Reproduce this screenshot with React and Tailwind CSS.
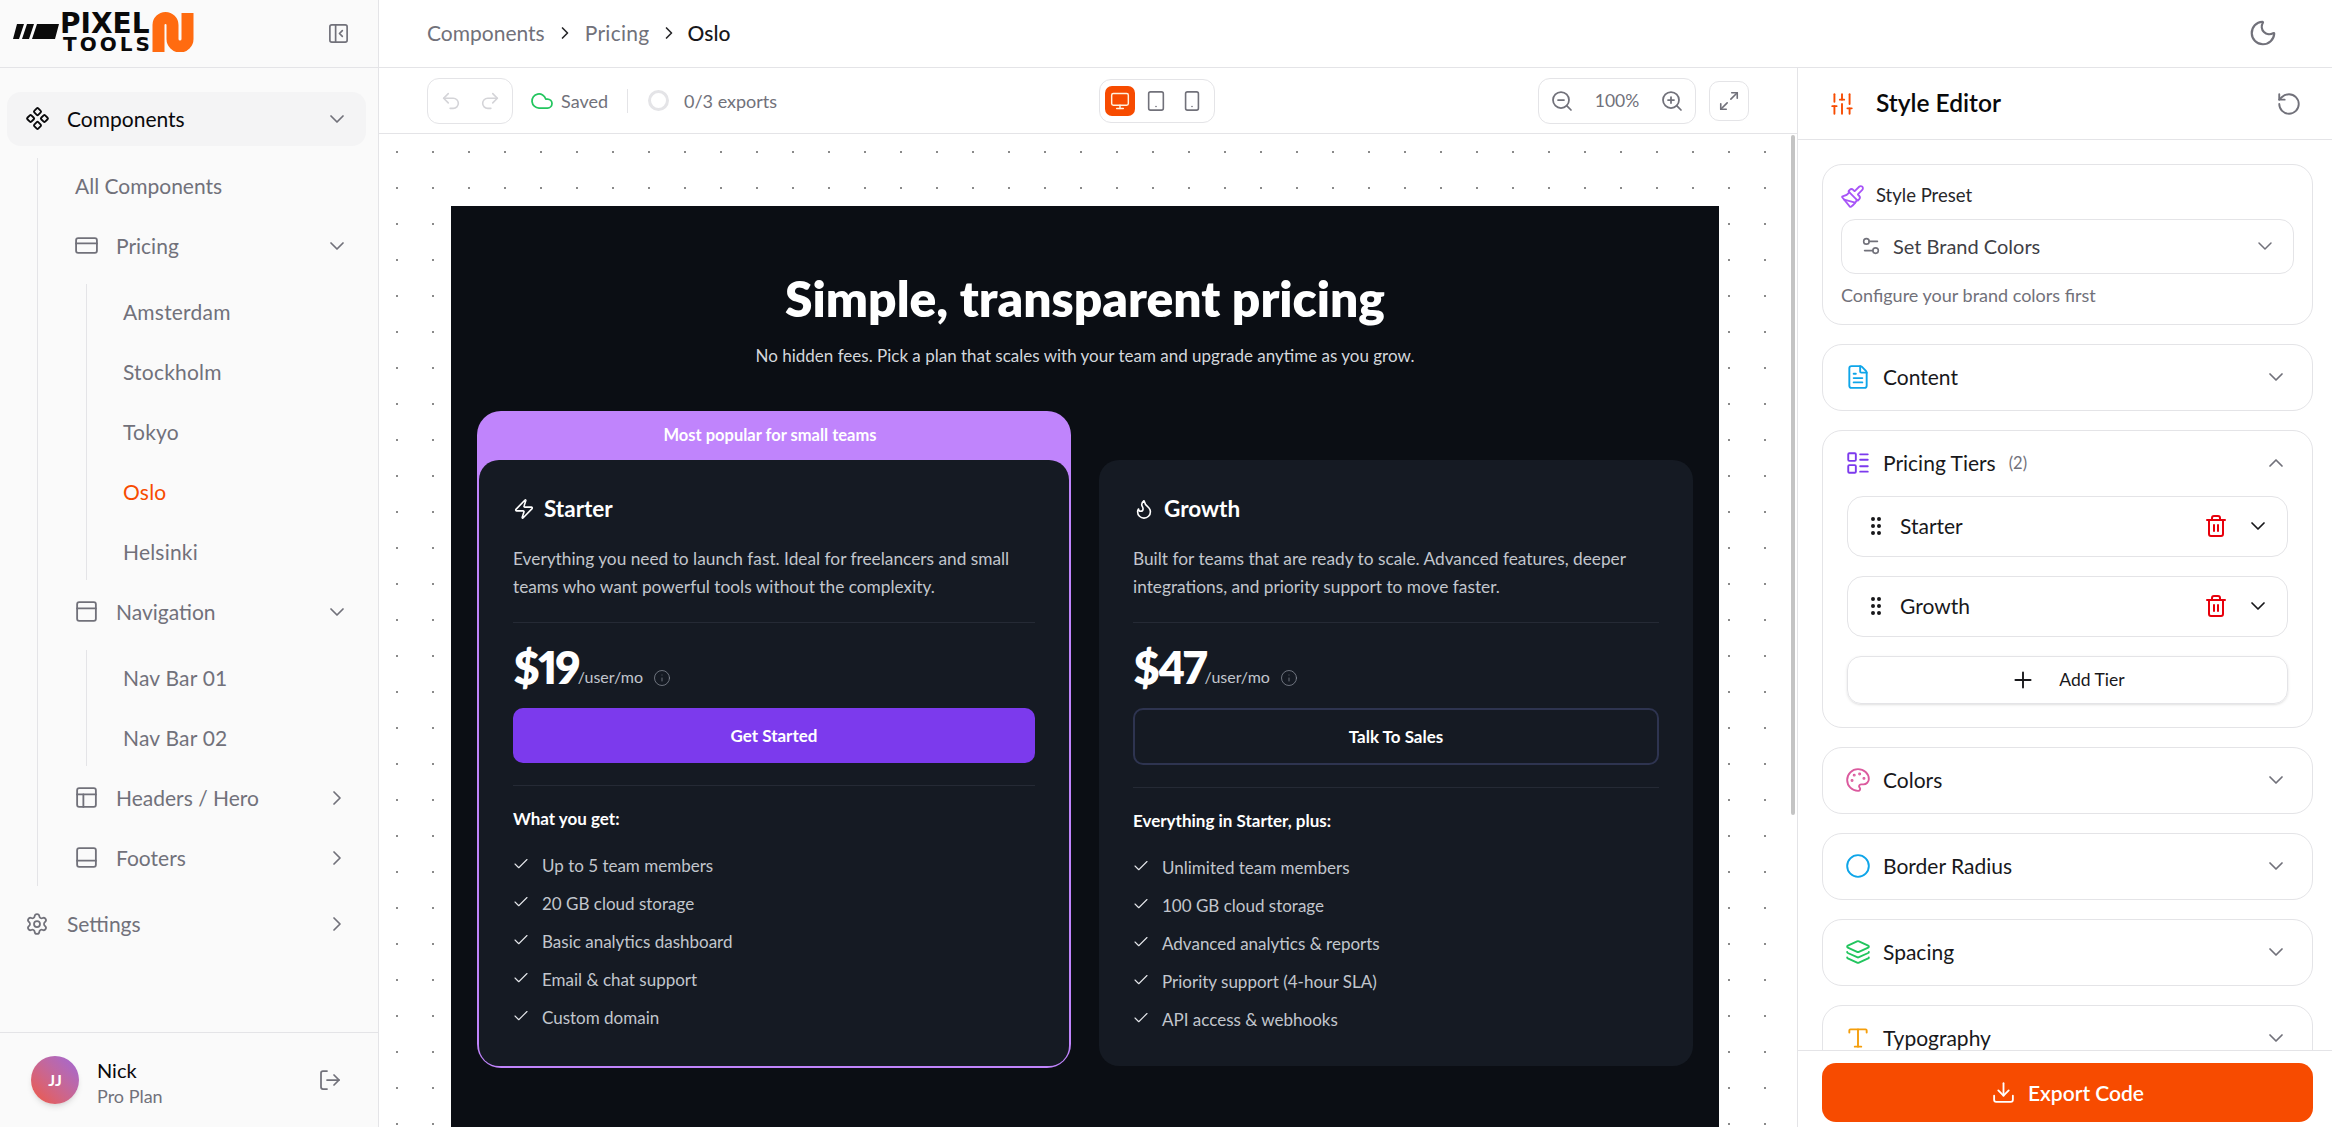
import React from 'react';
import {
  Component, ChevronDown, ChevronRight, ChevronUp, CreditCard, PanelTop, PanelsTopLeft, PanelBottom,
  Settings, LogOut, PanelLeftClose, Moon, Undo2, Redo2, Cloud, Monitor, Tablet, Smartphone, ZoomIn, ZoomOut,
  Maximize2, SlidersVertical, RotateCcw, Paintbrush, Settings2, FileText, LayoutList, Palette, Circle, Layers,
  Type, GripVertical, Trash2, Plus, Download, Zap, Flame, Info, Check,
} from 'lucide-react';

const Logo = () => (
  <div className="flex items-center mb-[3px]">
    <svg width="48" height="40" viewBox="0 0 48 40" className="shrink-0">
      <path d="M4 12h7l-5 15H0z M14 12h7l-5 15H9z M24 12h22l-4 15H19z" fill="#0a0a0a" transform="translate(1 0)" />
    </svg>
    <div className="flex flex-col w-[92px] font-['DejaVu_Sans'] font-bold text-[#0a0a0a] leading-none">
      <span className="text-[28px] h-[24px] leading-[24px]">PIXEL</span>
      <span className="text-[20px] h-[16px] leading-[16px] tracking-[3px] pl-[3px]">TOOLS</span>
    </div>
    <svg width="44" height="40" viewBox="0 0 44 40" className="shrink-0">
      <path d="M6.5 40V13a7 7 0 0 1 14 0V27a7.5 7.5 0 0 0 15 0V1" fill="none" stroke="#ff6b10" strokeWidth="12" />
    </svg>
  </div>
);

const NavRow = ({ icon: Icon, label, open, closed }) => (
  <div className="flex items-center h-[56px] pb-[1px] text-[21px] text-[#71717a]">
    <Icon size={25} strokeWidth={1.75} className="shrink-0 -ml-[1px]" />
    <span className="ml-[17px] flex-1">{label}</span>
    {open && <ChevronDown size={24} className="mr-[17px]" strokeWidth={1.75} />}
    {closed && <ChevronRight size={24} className="mr-[17px]" strokeWidth={1.75} />}
  </div>
);

const SubList = ({ items }) => (
  <div className="ml-[11px] border-l border-[#e4e4e7] pl-[36px] flex flex-col gap-[4px] mt-[10px]">
    {items.map((item) => (
      <div
        key={item}
        className={`h-[56px] pb-[1px] flex items-center text-[21px] tracking-[0.2px] ${item === 'Oslo' ? 'text-[#f74b00]' : 'text-[#71717a]'}`}
      >
        {item}
      </div>
    ))}
  </div>
);

const Sidebar = () => (
  <aside className="w-[379px] shrink-0 h-full bg-[#fafafa] border-r border-[#e4e4e7] flex flex-col">
    <div className="h-[68px] shrink-0 border-b border-[#e4e4e7] flex items-center justify-between pl-[12px] pr-[28px]">
      <Logo />
      <PanelLeftClose size={23} className="text-[#71717a]" strokeWidth={1.75} />
    </div>
    <nav className="flex-1 pl-[7px] pr-[12px] pt-[24px]">
      <div className="h-[54px] pb-[1px] rounded-[14px] bg-[#f4f4f5] flex items-center pl-[18px] text-[21px] text-[#09090b]">
        <Component size={25} strokeWidth={1.75} />
        <span className="ml-[17px] flex-1">Components</span>
        <ChevronDown size={24} className="mr-[17px] text-[#71717a]" strokeWidth={1.75} />
      </div>
      <div className="ml-[30px] mt-[12px] border-l border-[#e4e4e7] pl-[37px] flex flex-col">
        <div className="h-[56px] pb-[1px] flex items-center text-[21px] text-[#71717a]">All Components</div>
        <div className="flex flex-col gap-[4px] mt-[4px]">
          <NavRow icon={CreditCard} label="Pricing" open />
        </div>
        <SubList items={['Amsterdam', 'Stockholm', 'Tokyo', 'Oslo', 'Helsinki']} />
        <div className="mt-[4px]">
          <NavRow icon={PanelTop} label="Navigation" open />
        </div>
        <SubList items={['Nav Bar 01', 'Nav Bar 02']} />
        <div className="mt-[4px]">
          <NavRow icon={PanelsTopLeft} label="Headers / Hero" closed />
        </div>
        <div className="mt-[4px]">
          <NavRow icon={PanelBottom} label="Footers" closed />
        </div>
      </div>
      <div className="h-[54px] pb-[1px] mt-[11px] flex items-center pl-[18px] text-[21px] text-[#71717a]">
        <Settings size={24} strokeWidth={1.75} />
        <span className="ml-[18px] flex-1">Settings</span>
        <ChevronRight size={24} className="mr-[17px]" strokeWidth={1.75} />
      </div>
    </nav>
    <div className="h-[95px] shrink-0 border-t border-[#e4e4e7] flex items-center pl-[31px] pr-[36px]">
      <div className="w-[48px] h-[48px] rounded-full bg-gradient-to-tr from-[#f0553a] to-[#a066d8] shadow-md flex items-center justify-center text-white text-[16px] font-bold">
        JJ
      </div>
      <div className="ml-[18px] flex-1 flex flex-col pt-[6px]">
        <span className="text-[20px] leading-[26px] text-[#09090b]">Nick</span>
        <span className="text-[18px] leading-[26px] text-[#71717a]">Pro Plan</span>
      </div>
      <LogOut size={24} className="text-[#71717a]" strokeWidth={1.75} />
    </div>
  </aside>
);

const Header = () => (
  <header className="h-[68px] shrink-0 border-b border-[#e4e4e7] flex items-center pb-[2px] pl-[48px] pr-[54px] text-[21px] bg-white">
    <span className="text-[#71717a]">Components</span>
    <ChevronRight size={20} className="mx-[10px] text-[#27272a]" />
    <span className="text-[#71717a] tracking-[0.3px]">Pricing</span>
    <ChevronRight size={20} className="mx-[9px] text-[#27272a]" />
    <span className="text-[#18181b] font-medium">Oslo</span>
    <Moon size={30} className="ml-auto text-[#71717a]" strokeWidth={1.75} />
  </header>
);

const Toolbar = () => (
  <div className="h-[66px] shrink-0 border-b border-[#e4e4e7] flex items-center pl-[48px] pr-[48px] bg-white text-[18px] text-[#71717a]">
    <div className="w-[86px] h-[46px] rounded-[12px] border border-[#e4e4e7] flex items-center justify-center gap-[17px] text-[#d4d4d8]">
      <Undo2 size={22} strokeWidth={1.75} />
      <Redo2 size={22} strokeWidth={1.75} />
    </div>
    <Cloud size={24} className="ml-[17px] text-[#22c55e]" strokeWidth={1.75} />
    <span className="ml-[7px] mt-[2px]">Saved</span>
    <div className="w-px h-[24px] bg-[#e4e4e7] ml-[19px]" />
    <div className="w-[21px] h-[21px] rounded-full border-[3px] border-[#e4e4e7] ml-[20px]" />
    <span className="ml-[15px] mt-[2px]">0/3 exports</span>
    <div className="ml-[322px] w-[116px] h-[44px] mt-[1px] rounded-[12px] border border-[#e4e4e7] flex items-center pl-[5px]">
      <div className="w-[30px] h-[30px] rounded-[7px] bg-[#f74b00] flex items-center justify-center text-[#fff3e0]">
        <Monitor size={20} strokeWidth={1.75} />
      </div>
      <Tablet size={22} strokeWidth={1.75} className="ml-[10px] text-[#71717a]" />
      <Smartphone size={22} strokeWidth={1.75} className="ml-[14px] text-[#71717a]" />
    </div>
    <div className="ml-auto w-[158px] h-[46px] rounded-[12px] border border-[#e4e4e7] flex items-center justify-between px-[11px]">
      <ZoomOut size={24} strokeWidth={1.75} />
      <span className="text-[17.5px] mt-[2px]">100%</span>
      <ZoomIn size={24} strokeWidth={1.75} />
    </div>
    <div className="ml-[13px] w-[40px] h-[40px] rounded-[10px] border border-[#e4e4e7] flex items-center justify-center">
      <Maximize2 size={22} strokeWidth={1.75} />
    </div>
  </div>
);

const PlanCard = ({ icon: Icon, name, desc, price, cta, primary, heading, features }) => (
  <div className="bg-[#151a23] rounded-[20px] px-[34px] h-[606px] flex flex-col">
    <div className="flex items-center h-[24px] mt-[37px] text-white">
      <Icon size={22} strokeWidth={1.75} />
      <span className="ml-[9px] text-[22.5px] font-bold">{name}</span>
    </div>
    <p className="mt-[24px] text-[17.3px] leading-[28px] text-[#c2c6cd]">{desc}</p>
    <div className="mt-[21px] border-t border-[#252a35]" />
    <div className="mt-[22px] h-[44px] flex items-end text-white">
      <span className="text-[45px] leading-[44px] font-extrabold proportional-nums tracking-[-2px]">{price}</span>
      <span className="-ml-[1px] text-[16px] leading-[24px] text-[#c2c6cd]">/user/mo</span>
      <Info size={18} strokeWidth={1} className="ml-[10px] mb-[2px] text-[#8a8f99]" />
    </div>
    <div
      className={`mt-[19px] ${primary ? 'h-[55px] bg-[#7c3aed]' : 'h-[57px] border-2 border-[#2e3450]'} rounded-[10px] flex items-center justify-center text-[17px] font-bold text-white`}
    >
      {cta}
    </div>
    <div className="mt-[22px] border-t border-[#252a35]" />
    <div className="mt-[21px] text-[17px] leading-[24px] font-bold text-white">{heading}</div>
    <ul className="mt-[16px] flex flex-col">
      {features.map((f) => (
        <li key={f} className="h-[38px] flex items-center text-[17px] text-[#c2c6cd]">
          <Check size={18} strokeWidth={1.5} className="text-[#e4e6ea] mb-[5px] -ml-[1px]" />
          <span className="ml-[12px]">{f}</span>
        </li>
      ))}
    </ul>
  </div>
);

const Preview = () => (
  <div className="bg-[#0b0e14] px-[26px] h-[1100px]">
    <h1 className="pt-[62px] text-center text-[49.7px] leading-[60px] font-extrabold text-white">
      Simple, transparent pricing
    </h1>
    <p className="mt-[15px] text-center text-[17px] leading-[26px] text-[#d4d7dc]">
      No hidden fees. Pick a plan that scales with your team and upgrade anytime as you grow.
    </p>
    <div className="mt-[42px] grid grid-cols-2 gap-[28px] items-start">
      <div className="bg-[#c084fc] rounded-[24px] p-[2px] pt-0">
        <div className="h-[49px] pr-[8px] flex items-center justify-center text-[16.5px] font-bold text-white">
          Most popular for small teams
        </div>
        <PlanCard
          icon={Zap}
          name="Starter"
          desc="Everything you need to launch fast. Ideal for freelancers and small teams who want powerful tools without the complexity."
          price="$19"
          cta="Get Started"
          primary
          heading="What you get:"
          features={['Up to 5 team members', '20 GB cloud storage', 'Basic analytics dashboard', 'Email & chat support', 'Custom domain']}
        />
      </div>
      <div className="mt-[49px]">
        <PlanCard
          icon={Flame}
          name="Growth"
          desc="Built for teams that are ready to scale. Advanced features, deeper integrations, and priority support to move faster."
          price="$47"
          cta="Talk To Sales"
          heading="Everything in Starter, plus:"
          features={['Unlimited team members', '100 GB cloud storage', 'Advanced analytics & reports', 'Priority support (4-hour SLA)', 'API access & webhooks']}
        />
      </div>
    </div>
  </div>
);

const Section = ({ icon: Icon, color, label }) => (
  <div className="h-[67px] pb-[1px] shrink-0 rounded-[20px] border border-[#e4e4e7] flex items-center pl-[22px] pr-[24px] text-[21px] text-[#18181b]">
    <Icon size={26} strokeWidth={1.75} className={color} />
    <span className="ml-[12px] flex-1">{label}</span>
    <ChevronDown size={24} className="text-[#71717a]" strokeWidth={1.75} />
  </div>
);

const TierRow = ({ name }) => (
  <div className="h-[61px] pb-[1px] rounded-[16px] border border-[#e4e4e7] flex items-center pl-[16px] pr-[17px] text-[21px] text-[#18181b]">
    <GripVertical size={24} className="text-[#18181b]" />
    <span className="ml-[12px] flex-1">{name}</span>
    <Trash2 size={24} className="text-[#e7000b]" />
    <ChevronDown size={24} strokeWidth={1.75} className="ml-[18px] text-[#18181b]" />
  </div>
);

const StylePanel = () => (
  <aside className="w-[535px] shrink-0 h-full border-l border-[#e4e4e7] bg-white flex flex-col">
    <div className="h-[72px] shrink-0 border-b border-[#e4e4e7] flex items-center pl-[31px] pr-[30px]">
      <SlidersVertical size={26} className="text-[#f74b00]" strokeWidth={1.75} />
      <span className="ml-[21px] flex-1 text-[24.5px] font-semibold text-[#09090b]">Style Editor</span>
      <RotateCcw size={26} className="text-[#71717a]" strokeWidth={1.75} />
    </div>
    <div className="flex-1 min-h-0 overflow-hidden pl-[24px] pr-[19px] pt-[24px] flex flex-col gap-[19px]">
      <div className="h-[161px] shrink-0 rounded-[20px] border border-[#e4e4e7] px-[18px] pt-[18px]">
        <div className="flex items-center h-[26px] text-[18.5px] text-[#27272a]">
          <Paintbrush size={25} className="text-[#a855f7] -ml-[1px]" strokeWidth={1.75} />
          <span className="ml-[11px]">Style Preset</span>
        </div>
        <div className="mt-[10px] h-[55px] pb-[2px] rounded-[14px] border border-[#e4e4e7] flex items-center pl-[18px] pr-[16px] text-[20px] text-[#3f3f46]">
          <Settings2 size={22} className="text-[#71717a]" strokeWidth={1.75} />
          <span className="ml-[11px] flex-1">Set Brand Colors</span>
          <ChevronDown size={24} className="text-[#71717a]" strokeWidth={1.5} />
        </div>
        <div className="mt-[8px] text-[18px] text-[#71717a]">Configure your brand colors first</div>
      </div>
      <Section icon={FileText} color="text-[#0ea5e9]" label="Content" />
      <div className="h-[298px] shrink-0 rounded-[20px] border border-[#e4e4e7] px-[24px]">
        <div className="h-[65px] pb-[1px] flex items-center text-[21px] text-[#18181b]">
          <LayoutList size={26} strokeWidth={1.75} className="text-[#7c3aed] -ml-[2px]" />
          <span className="ml-[12px]">Pricing Tiers</span>
          <span className="ml-[13px] text-[16.5px] text-[#71717a] flex-1">(2)</span>
          <ChevronUp size={24} className="text-[#71717a]" strokeWidth={1.75} />
        </div>
        <div className="flex flex-col gap-[19px]">
          <TierRow name="Starter" />
          <TierRow name="Growth" />
          <div className="h-[48px] rounded-[14px] border border-[#e4e4e7] shadow-sm flex items-center justify-center text-[17.5px] text-[#18181b]">
            <Plus size={26} strokeWidth={1.75} />
            <span className="ml-[23px]">Add Tier</span>
          </div>
        </div>
      </div>
      <Section icon={Palette} color="text-[#db5a9e]" label="Colors" />
      <Section icon={Circle} color="text-[#0ea5e9]" label="Border Radius" />
      <Section icon={Layers} color="text-[#22c55e]" label="Spacing" />
      <Section icon={Type} color="text-[#f59e0b]" label="Typography" />
    </div>
    <div className="h-[77px] shrink-0 border-t border-[#e4e4e7] pl-[24px] pr-[19px] pt-[12px] bg-white">
      <div className="h-[59px] rounded-[14px] bg-[#f74b00] flex items-center justify-center text-white text-[21px] font-semibold">
        <Download size={25} strokeWidth={1.75} />
        <span className="ml-[12px]">Export Code</span>
      </div>
    </div>
  </aside>
);

export default function App() {
  return (
    <div className="flex w-[2332px] h-[1127px] overflow-hidden bg-white font-['Lato',sans-serif]">
      <Sidebar />
      <div className="flex-1 min-w-0 flex flex-col">
        <Header />
        <div className="flex-1 min-h-0 flex">
          <div className="flex-1 min-w-0 flex flex-col">
            <Toolbar />
            <div className="flex-1 min-h-0 flex">
              <div className="flex-1 min-w-0 overflow-hidden p-[72px] bg-[radial-gradient(circle,#8a8a8a_1px,transparent_1.2px)] bg-[size:36px_36px]">
                <Preview />
              </div>
              <div className="w-[6px] shrink-0 pt-[1px]">
                <div className="w-[4px] h-[680px] rounded-full bg-[#c4c4c4]" />
              </div>
            </div>
          </div>
          <StylePanel />
        </div>
      </div>
    </div>
  );
}
